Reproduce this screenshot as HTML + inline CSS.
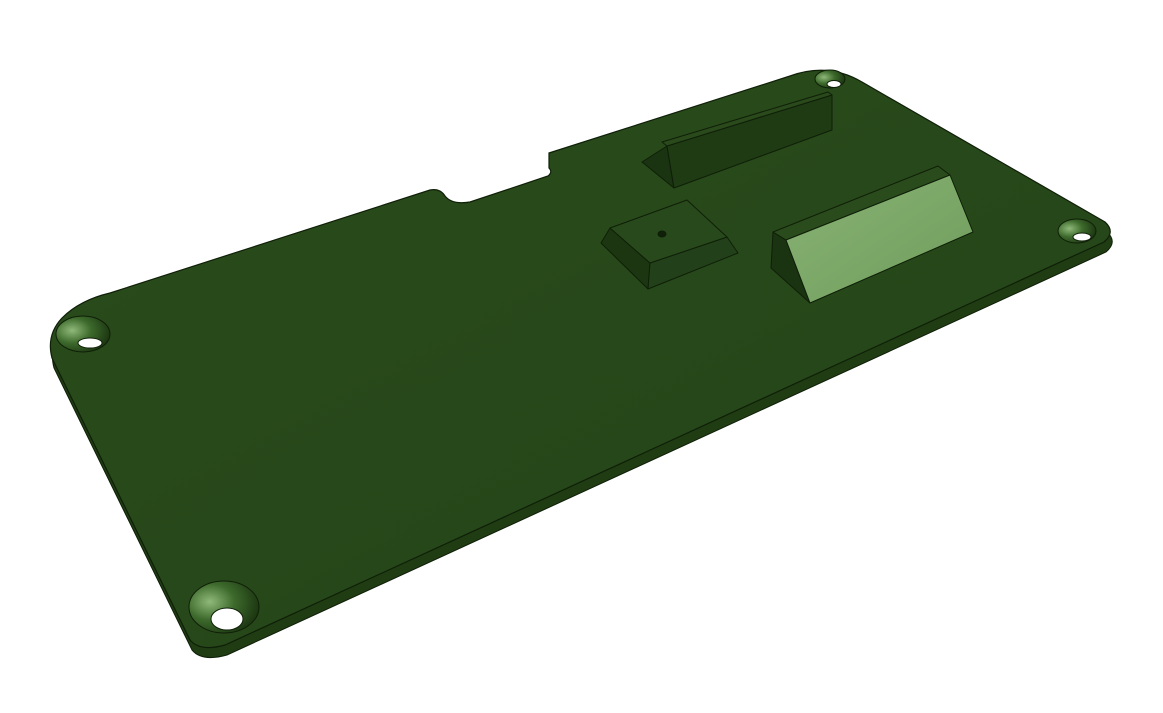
<!DOCTYPE html>
<html><head><meta charset="utf-8"><style>html,body{margin:0;padding:0;background:#fff;width:1163px;height:713px;overflow:hidden}</style></head>
<body>
<svg width="1163" height="713" viewBox="0 0 1163 713" xmlns="http://www.w3.org/2000/svg">
<defs>
<radialGradient id="hl" cx="0.3" cy="0.4" r="0.7"><stop offset="0" stop-color="#8fb97a"/><stop offset="0.5" stop-color="#3d6a2c"/><stop offset="1" stop-color="#1d3812"/></radialGradient>
<linearGradient id="pf" x1="0" y1="0" x2="1" y2="1"><stop offset="0" stop-color="#88b274"/><stop offset="1" stop-color="#6f9d5c"/></linearGradient>
<linearGradient id="top" x1="0" y1="0" x2="1" y2="1"><stop offset="0" stop-color="#2a4c1b"/><stop offset="1" stop-color="#244418"/></linearGradient>
<path id="plate" d="M62,318 Q80,300 110,293 L430,190 Q440,188 445,196 Q452,205 470,202 L548,176 Q553,172 549,168 L549,153 L790,76 Q828,62 862,82 L1105,222 Q1116,232 1104,242 L225,645 Q200,652 190,640 L52,358 Q46,335 62,318 Z"/>
</defs>
<!-- side/thickness -->
<use href="#plate" transform="translate(2,10)" fill="#1f3c13" stroke="#0f1f08" stroke-width="1"/>
<!-- top face -->
<use href="#plate" fill="url(#top)" stroke="#0f1f08" stroke-width="1.2"/>
<!-- holes -->
<g stroke="#0f1f08" stroke-width="1">
<ellipse cx="830" cy="79" rx="15" ry="9" fill="url(#hl)"/>
<ellipse cx="834" cy="84" rx="7" ry="3.5" fill="#fff"/>
<ellipse cx="1077" cy="231" rx="19" ry="12" fill="url(#hl)"/>
<ellipse cx="1082" cy="237" rx="9" ry="4" fill="#fff"/>
<ellipse cx="83" cy="334" rx="27" ry="18" fill="url(#hl)"/>
<ellipse cx="90" cy="343" rx="12" ry="5" fill="#fff"/>
<ellipse cx="224" cy="607" rx="35" ry="26" fill="url(#hl)"/>
<ellipse cx="227" cy="619" rx="16" ry="11" fill="#fff"/>
</g>
<!-- top rail -->
<g stroke="#0f1f08" stroke-width="1" stroke-linejoin="round">
<polygon points="642,162 667,146 674,188" fill="#1a3310"/>
<polygon points="667,146 832,95 832,130 674,188" fill="#1f3b14"/>
<polygon points="667,146 662,142 828,92 832,95" fill="#2a4a1c"/>
</g>
<!-- small block -->
<g stroke="#0f1f08" stroke-width="1" stroke-linejoin="round">
<polygon points="601,243 610,228 650,263 648,289" fill="#1c3611"/>
<polygon points="650,263 727,237 738,253 648,289" fill="#22401a"/>
<polygon points="610,228 687,200 727,237 650,263" fill="#28491b"/>
<ellipse cx="662" cy="234" rx="4" ry="3" fill="#0f1f08"/>
</g>
<!-- prism -->
<g stroke="#0f1f08" stroke-width="1" stroke-linejoin="round">
<polygon points="771,268 773,232 786,240 810,303" fill="#1a3310"/>
<polygon points="773,232 938,166 950,175 786,240" fill="#2a4c1c"/>
<polygon points="786,240 950,175 973,232 810,303" fill="url(#pf)"/>
</g>
</svg>
</body></html>
